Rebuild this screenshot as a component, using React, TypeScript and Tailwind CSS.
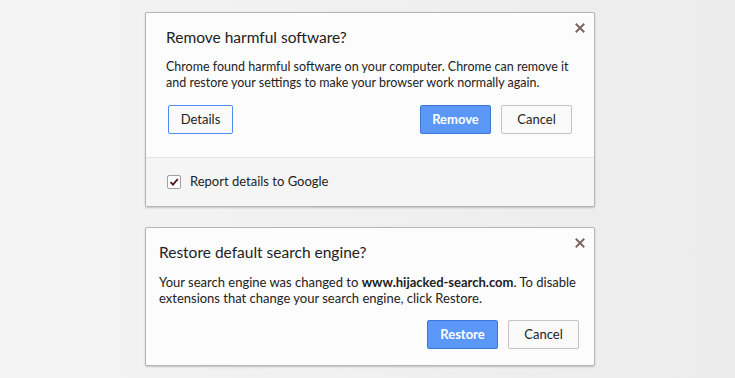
import React from "react";

const font = { fontFamily: 'Lato, "Noto Sans", Arial, sans-serif' };

function CloseX({ className }: { className: string }) {
  return (
    <button type="button" className={className} title="Close">
      <svg width="10" height="10" viewBox="0 0 10 10">
        <path d="M1.5 1.5 L8.5 8.5 M8.5 1.5 L1.5 8.5" stroke="#7d6565" strokeWidth="2" strokeLinecap="square" />
      </svg>
    </button>
  );
}

function Checkbox() {
  return (
    <span className="w-[14px] h-[14px] border border-[#a0a0a0] rounded-[2px] bg-white flex items-center justify-center">
      <svg width="10" height="10" viewBox="0 0 10 10">
        <path d="M1.5 5.2 L4 7.6 L8.8 2" stroke="#4a1414" strokeWidth="1.8" fill="none" />
      </svg>
    </span>
  );
}

const btnBlue =
  "h-full rounded-[2px] bg-[#5a97f7] border border-[#3c78dc] text-white font-bold text-[13px]";
const btnGray =
  "h-full rounded-[2px] bg-[#fafafa] border border-[#c3c3c3] text-[#222] text-[13px]";

export default function App() {
  return (
    <div
      className="w-[735px] h-[378px] bg-gradient-to-r from-[#f4f4f4] to-[#ececec] flex flex-col pl-[145px] pt-[12px] text-[#222]"
      style={font}
    >
      <div className="relative w-[450px] h-[195px] bg-[#fcfcfc] border border-[#b5b5b5] rounded-[2px] shadow-[0_1px_2px_rgba(0,0,0,0.2)] flex flex-col">
        <CloseX className="absolute right-[9px] top-[10px]" />
        <div className="flex-1 pl-[20px] pr-[22px] pt-[14px]">
          <h2 className="text-[15.5px] leading-[20px] text-[#222]">Remove harmful software?</h2>
          <p className="mt-[12px] text-[12.5px] leading-[16px] text-[#222] whitespace-nowrap">
            Chrome found harmful software on your computer. Chrome can remove it
            <br />
            and restore your settings to make your browser work normally again.
          </p>
          <div className="mt-[14px] h-[29px] flex gap-[10px]">
            <button type="button" className="ml-[2px] h-full w-[65px] rounded-[2px] bg-[#fafafa] border border-[#4d8ef5] text-[#222] text-[13px]">
              Details
            </button>
            <div className="flex-1" />
            <button type="button" className={btnBlue + " w-[71px]"}>
              Remove
            </button>
            <button type="button" className={btnGray + " w-[71px]"}>
              Cancel
            </button>
          </div>
        </div>
        <div className="h-[49px] border-t border-[#e4e4e4] bg-[#f5f5f5] flex items-center gap-[9px] pl-[21px] pb-[1px]">
          <Checkbox />
          <span className="text-[13px] text-[#222]">Report details to Google</span>
        </div>
      </div>

      <div className="relative mt-[20px] w-[450px] h-[139px] bg-[#fcfcfc] border border-[#b5b5b5] rounded-[2px] shadow-[0_1px_2px_rgba(0,0,0,0.2)] pl-[13px] pr-[15px] pt-[14px]">
        <CloseX className="absolute right-[9px] top-[10px]" />
        <h2 className="text-[15.5px] leading-[20px] text-[#222]">Restore default search engine?</h2>
        <p className="mt-[12px] text-[13px] leading-[16px] text-[#222] whitespace-nowrap">
          Your search engine was changed to <b>www.hijacked-search.com</b>. To disable
          <br />
          extensions that change your search engine, click Restore.
        </p>
        <div className="mt-[14px] h-[29px] flex justify-end gap-[10px]">
          <button type="button" className={btnBlue + " w-[71px]"}>
            Restore
          </button>
          <button type="button" className={btnGray + " w-[71px]"}>
            Cancel
          </button>
        </div>
      </div>
    </div>
  );
}
